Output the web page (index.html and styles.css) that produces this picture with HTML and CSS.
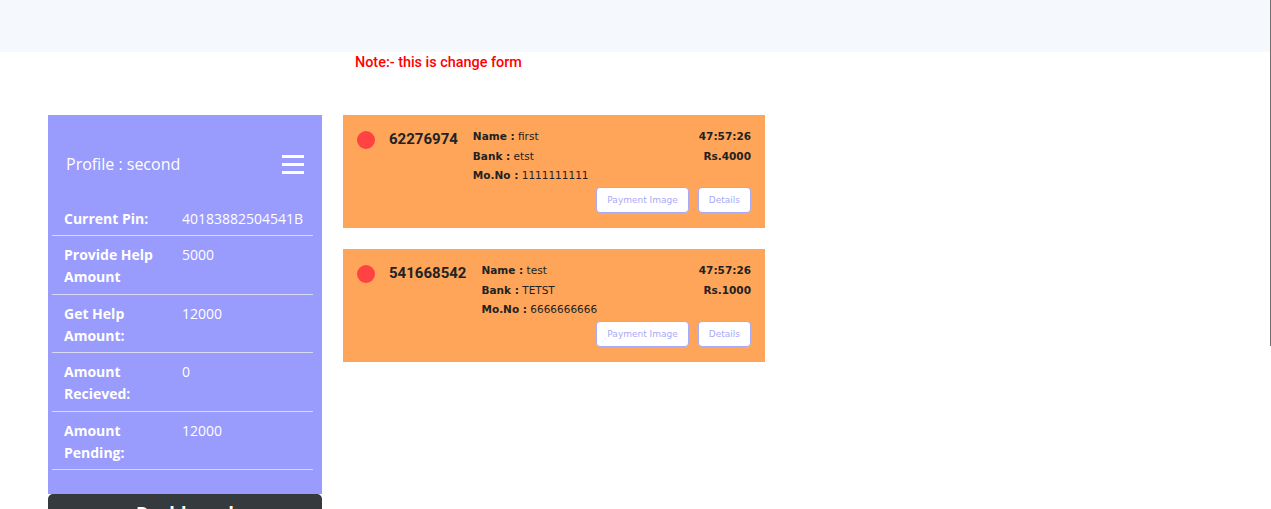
FILE: index.html
```html
<!DOCTYPE html>
<html lang="en">
<head>
<meta charset="utf-8">
<title>Profile</title>
<link rel="stylesheet" href="styles.css">
</head>
<body>
<header class="topbar"></header>
<div class="scroll-thumb"></div>
<main class="page">
  <div class="note-row">
    <p class="note">Note:- this is change form</p>
  </div>
  <div class="layout">
    <aside class="sidebar">
      <div class="panel">
        <div class="panel-head">
          <span class="profile-title">Profile : second</span>
          <span class="hamburger"><i></i><i></i><i></i></span>
        </div>
        <div class="info-table">
          <div class="info-row"><div class="info-label">Current Pin:</div><div class="info-value">40183882504541B</div></div>
          <div class="info-row"><div class="info-label">Provide Help Amount</div><div class="info-value">5000</div></div>
          <div class="info-row"><div class="info-label">Get Help Amount:</div><div class="info-value">12000</div></div>
          <div class="info-row"><div class="info-label">Amount Recieved:</div><div class="info-value">0</div></div>
          <div class="info-row"><div class="info-label">Amount Pending:</div><div class="info-value">12000</div></div>
        </div>
      </div>
      <a class="dash-btn" href="#">Dashboard</a>
    </aside>
    <section class="cards">
      <div class="card">
        <span class="dot"></span>
        <span class="card-id">62276974</span>
        <div class="card-body">
          <div class="card-grid">
            <div class="line"><b>Name :</b> first</div><div class="line right"><b>47:57:26</b></div>
            <div class="line"><b>Bank :</b> etst</div><div class="line right"><b>Rs.4000</b></div>
            <div class="line"><b>Mo.No :</b> 1111111111</div><div class="line right"></div>
          </div>
          <div class="card-actions">
            <button class="btn">Payment Image</button>
            <button class="btn">Details</button>
          </div>
        </div>
      </div>
      <div class="card">
        <span class="dot"></span>
        <span class="card-id">541668542</span>
        <div class="card-body">
          <div class="card-grid">
            <div class="line"><b>Name :</b> test</div><div class="line right"><b>47:57:26</b></div>
            <div class="line"><b>Bank :</b> TETST</div><div class="line right"><b>Rs.1000</b></div>
            <div class="line"><b>Mo.No :</b> 6666666666</div><div class="line right"></div>
          </div>
          <div class="card-actions">
            <button class="btn">Payment Image</button>
            <button class="btn">Details</button>
          </div>
        </div>
      </div>
    </section>
  </div>
</main>
</body>
</html>
```

FILE: styles.css
```css
* { box-sizing: border-box; }
html, body { margin: 0; padding: 0; }
body {
  background: #ffffff;
  font-family: "Open Sans", sans-serif;
  overflow: hidden;
}
.topbar {
  height: 52px;
  background: #f5f9fd;
}
.scroll-thumb {
  position: absolute;
  top: 0;
  right: 0;
  width: 1px;
  height: 346px;
  background: #6e6e6e;
}
.page {
  padding-left: 48px;
}
.note-row {
  height: 63px;
  padding-left: 307px;
}
.note {
  margin: 0;
  padding-top: 2px;
  font-family: Roboto, sans-serif;
  font-weight: 500;
  font-size: 14.4px;
  line-height: 18px;
  color: #ff0000;
}
.layout {
  display: flex;
  align-items: flex-start;
  gap: 21px;
}
.sidebar {
  width: 274px;
  flex: none;
}
.panel {
  background: #999bfd;
  color: #ffffff;
  padding-bottom: 24px;
}
.panel-head {
  display: flex;
  align-items: center;
  justify-content: space-between;
  padding: 38px 18px 24.5px 18px;
  height: 84.5px;
}
.profile-title {
  font-size: 16px;
  line-height: 22px;
}
.hamburger {
  display: flex;
  flex-direction: column;
  gap: 5px;
  width: 22px;
}
.hamburger i {
  display: block;
  height: 3px;
  background: #ffffff;
}
.info-table {
  margin: 0 9px 0 4px;
}
.info-row {
  display: flex;
  padding: 8px 0 5.5px 0;
  border-bottom: 1px solid #d8d9f4;
  font-size: 14px;
  line-height: 22px;
}
.info-label {
  width: 130px;
  flex: none;
  padding-left: 12px;
  padding-right: 14px;
  font-weight: 700;
}
.info-value {
  flex: 1;
  white-space: nowrap;
}
.dash-btn {
  display: block;
  height: 44px;
  background: #343a3d;
  border-radius: 5px;
  color: #ffffff;
  text-decoration: none;
  text-align: center;
  font-size: 18px;
  font-weight: 700;
  line-height: 22px;
  padding-top: 8px;
}
.cards {
  width: 422px;
  display: flex;
  flex-direction: column;
  gap: 21px;
}
.card {
  background: #ffa559;
  height: 113px;
  display: flex;
  align-items: flex-start;
  padding: 12px 14px 15px 14px;
  color: #222222;
  font-family: "DejaVu Sans", sans-serif;
}
.dot {
  width: 18px;
  height: 18px;
  border-radius: 50%;
  background: #ff4343;
  margin-top: 4px;
  flex: none;
}
.card-id {
  margin-left: 14px;
  font-family: Roboto, sans-serif;
  font-weight: 700;
  font-size: 15px;
  line-height: 24px;
  color: #222222;
  flex: none;
}
.card-body {
  flex: 1;
  margin-left: 15px;
}
.card-grid {
  display: grid;
  grid-template-columns: 1fr auto;
  font-size: 10.5px;
  line-height: 19.5px;
}
.line b { font-weight: 700; }
.right { text-align: right; }
.card-actions {
  display: flex;
  justify-content: flex-end;
  gap: 9px;
  margin-top: 1px;
}
.btn {
  height: 26px;
  background: #ffffff;
  border: 1px solid #a8a9f7;
  border-radius: 4px;
  color: #a9aaf6;
  font-family: "DejaVu Sans", sans-serif;
  font-size: 9px;
  padding: 0 10px;
}
```
